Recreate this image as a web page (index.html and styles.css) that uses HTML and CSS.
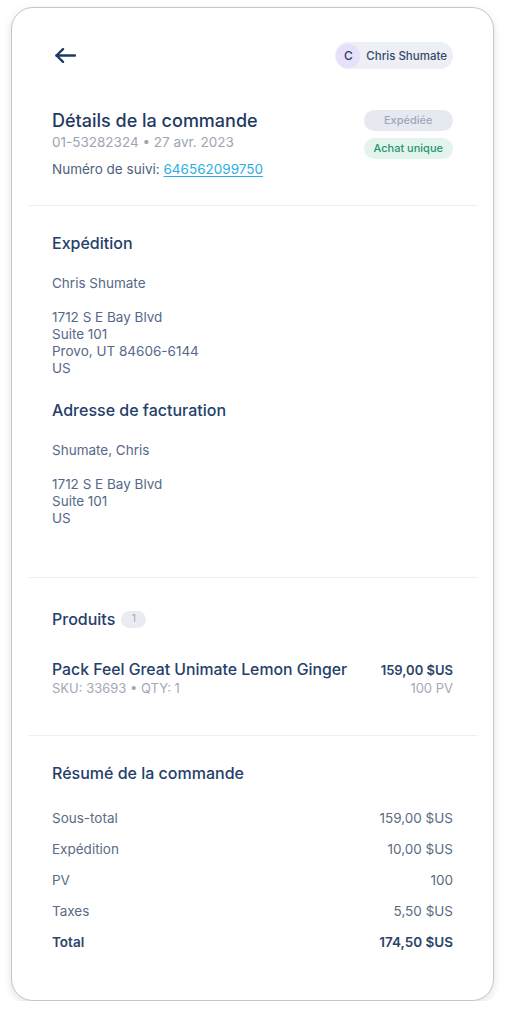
FILE: index.html
```html
<!DOCTYPE html>
<html lang="fr">
<head>
<meta charset="utf-8">
<title>Détails de la commande</title>
<link rel="stylesheet" href="styles.css">
</head>
<body>
<div class="card">
  <header class="topbar">
    <svg class="back" width="21" height="15" viewBox="0 0 21 15" fill="none" stroke="#1d3a60" stroke-width="2.4" stroke-linecap="round" stroke-linejoin="round"><path d="M1.5 7.5H20"/><path d="M8 1.2L1.5 7.5L8 13.8"/></svg>
    <div class="user-pill"><span class="avatar">C</span><span class="user-name">Chris Shumate</span></div>
  </header>

  <section class="section order">
    <div class="order-info">
      <h1 class="title">Détails de la commande</h1>
      <div class="subtitle">01-53282324 • 27 avr. 2023</div>
      <div class="tracking">Numéro de suivi: <a class="link" href="#">646562099750</a></div>
    </div>
    <div class="badges">
      <span class="badge badge-grey">Expédiée</span>
      <span class="badge badge-green">Achat unique</span>
    </div>
  </section>

  <section class="section addresses">
    <h2 class="heading">Expédition</h2>
    <p class="address">Chris Shumate<br><br>1712 S E Bay Blvd<br>Suite 101<br>Provo, UT 84606-6144<br>US</p>
    <h2 class="heading heading-second">Adresse de facturation</h2>
    <p class="address">Shumate, Chris<br><br>1712 S E Bay Blvd<br>Suite 101<br>US</p>
  </section>

  <section class="section products">
    <h2 class="heading">Produits <span class="count">1</span></h2>
    <div class="product">
      <div class="product-info">
        <div class="product-name">Pack Feel Great Unimate Lemon Ginger</div>
        <div class="product-meta">SKU: 33693 • QTY: 1</div>
      </div>
      <div class="product-price">
        <div class="price">159,00 $US</div>
        <div class="product-meta">100 PV</div>
      </div>
    </div>
  </section>

  <section class="section summary">
    <h2 class="heading">Résumé de la commande</h2>
    <div class="rows">
      <div class="row"><span>Sous-total</span><span>159,00 $US</span></div>
      <div class="row"><span>Expédition</span><span>10,00 $US</span></div>
      <div class="row"><span>PV</span><span>100</span></div>
      <div class="row"><span>Taxes</span><span>5,50 $US</span></div>
      <div class="row row-total"><span>Total</span><span>174,50 $US</span></div>
    </div>
  </section>
</div>
</body>
</html>
```

FILE: styles.css
```css
* { box-sizing: border-box; }
html, body { margin: 0; padding: 0; background: #ffffff; }
body {
  font-family: Inter, "Noto Sans", sans-serif;
  color: #53657f;
  padding: 7px 11px 0;
}
.card {
  border: 1.5px solid #c6c6c6;
  border-radius: 22px;
  box-shadow: 0 3px 9px rgba(0, 0, 0, 0.12);
  padding: 0 16px;
  height: 994px;
  background: #fff;
}
.topbar {
  display: flex;
  align-items: center;
  justify-content: space-between;
  padding: 34px 24px 0 27px;
  height: 61px;
}
.back { display: block; }
.user-pill {
  display: flex;
  align-items: center;
  gap: 6px;
  height: 27px;
  padding: 0 6px 0 1.5px;
  background: #eceff3;
  border-radius: 14px;
}
.avatar {
  width: 24px;
  height: 24px;
  border-radius: 50%;
  background: #e6e0fb;
  color: #2b4266;
  font-size: 12px;
  font-weight: 500;
  display: flex;
  align-items: center;
  justify-content: center;
}
.user-name {
  font-size: 11.5px;
  font-weight: 500;
  color: #34496b;
}
.section {
  padding: 26px 24px;
  border-bottom: 1px solid #eceef1;
}
.section:last-child { border-bottom: none; }
.order {
  display: flex;
  justify-content: space-between;
  align-items: flex-start;
  padding-top: 40px;
  padding-bottom: 26px;
}
.title {
  margin: 0;
  font-size: 18px;
  line-height: 24px;
  font-weight: 500;
  color: #1f3a60;
}
.subtitle {
  font-size: 13.5px;
  line-height: 18px;
  color: #9ca5b3;
}
.tracking {
  margin-top: 8px;
  font-size: 13.5px;
  line-height: 20px;
  color: #4f617c;
}
.link { color: #2aaee3; text-decoration: underline; text-underline-offset: 2px; }
.badges {
  display: flex;
  flex-direction: column;
  gap: 7px;
  margin-top: 1px;
}
.badge {
  display: block;
  height: 21px;
  line-height: 21px;
  border-radius: 11px;
  font-size: 11px;
  font-weight: 500;
  text-align: center;
  padding: 0 10px;
}
.badge-grey { background: #e6e9ef; color: #9ea8b8; }
.badge-green { background: #e3f4ee; color: #27956b; }
.heading {
  margin: 0;
  font-size: 16px;
  line-height: 22px;
  font-weight: 500;
  color: #24406a;
  display: flex;
  align-items: center;
  gap: 6px;
}
.addresses { padding-top: 26px; padding-bottom: 50px; }
.address {
  margin: 21px 0 0;
  font-size: 13.5px;
  line-height: 17px;
  color: #56688a;
}
.heading-second { margin-top: 22px; }
.products { padding-top: 30px; padding-bottom: 39px; }
.count {
  display: inline-flex;
  align-items: center;
  justify-content: center;
  width: 25px;
  height: 17px;
  border-radius: 9px;
  background: #e9ecf0;
  color: #a2aab6;
  font-size: 10.5px;
  font-weight: 400;
}
.product {
  display: flex;
  justify-content: space-between;
  align-items: flex-start;
  margin-top: 30px;
}
.product-name {
  font-size: 15.8px;
  line-height: 20px;
  font-weight: 500;
  color: #24406a;
}
.product-meta {
  font-size: 13px;
  line-height: 16px;
  color: #a1a9b6;
}
.product-price { text-align: right; }
.price {
  font-size: 13px;
  line-height: 18px;
  font-weight: 600;
  color: #2a4469;
  margin-top: 1px;
}
.product-price .product-meta { margin-top: 1px; }
.summary { padding-top: 26px; }
.rows {
  margin-top: 24px;
  display: flex;
  flex-direction: column;
  gap: 11px;
}
.row {
  display: flex;
  justify-content: space-between;
  font-size: 13.5px;
  line-height: 20px;
  color: #5a6b84;
}
.row-total { font-weight: 600; color: #2a4469; }
```
